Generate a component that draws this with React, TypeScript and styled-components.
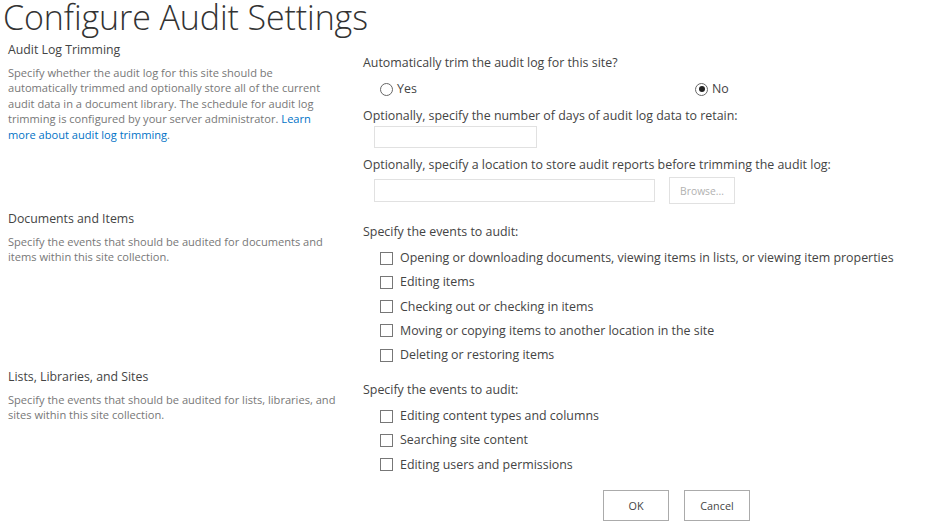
import React from "react";
import styled, { createGlobalStyle } from "styled-components";

const GlobalStyle = createGlobalStyle`
  html, body {
    margin: 0;
    padding: 0;
    background: #fff;
  }
  body {
    font-family: "Open Sans", "Noto Sans", Arial, sans-serif;
    color: #444;
  }
`;

const Page = styled.div`
  width: 933px;
  height: 532px;
  overflow: hidden;
`;

const Title = styled.h1`
  margin: 0 0 6px 3px;
  font-size: 34px;
  font-weight: 300;
  line-height: 34px;
  color: #333;
  letter-spacing: -0.1px;
`;

const Section = styled.section<{ $h?: number }>`
  display: grid;
  grid-template-columns: 363px 1fr;
  height: ${(p) => (p.$h ? `${p.$h}px` : "auto")};
`;

const Info = styled.div`
  padding-left: 8px;
  padding-top: 1px;
`;

const SectionHeading = styled.h3`
  margin: 0;
  font-size: 12.3px;
  font-weight: 400;
  line-height: 18px;
  color: #444;
`;

const Description = styled.p`
  margin: 6px 0 0;
  width: 332px;
  font-size: 11.1px;
  line-height: 15.4px;
  color: #777;
`;

const Link = styled.a`
  color: #0072c6;
  text-decoration: none;
`;

const Fields = styled.div`
  padding-top: 14px;
`;

const Label = styled.div<{ $gap?: number }>`
  font-size: 12.4px;
  line-height: 18px;
  color: #444;
  margin-top: ${(p) => p.$gap ?? 0}px;
`;

const RadioRow = styled.div`
  display: grid;
  grid-template-columns: 315px auto;
  padding-left: 17px;
  margin-top: 8px;
`;

const Choice = styled.label`
  display: flex;
  align-items: center;
  gap: 4px;
  font-size: 12.4px;
  line-height: 18px;
  color: #444;
`;

const Radio = styled.span<{ $checked?: boolean }>`
  position: relative;
  width: 11px;
  height: 11px;
  border: 1px solid #666;
  border-radius: 50%;
  background: #fff;
  &::after {
    content: "";
    display: ${(p) => (p.$checked ? "block" : "none")};
    position: absolute;
    left: 2.5px;
    top: 2.5px;
    width: 6px;
    height: 6px;
    border-radius: 50%;
    background: #222;
  }
`;

const InputRow = styled.div<{ $gap?: number }>`
  display: flex;
  align-items: center;
  gap: 14px;
  padding-left: 11px;
  margin-top: ${(p) => p.$gap ?? 0}px;
`;

const TextBox = styled.div<{ $w: number; $h: number }>`
  width: ${(p) => p.$w}px;
  height: ${(p) => p.$h}px;
  box-sizing: border-box;
  border: 1px solid #e1e1e1;
  background: #fff;
`;

const Button = styled.button<{ $disabled?: boolean }>`
  box-sizing: border-box;
  min-width: 66px;
  height: ${(p) => (p.$disabled ? 27 : 31)}px;
  padding: 0 10px;
  border: 1px solid ${(p) => (p.$disabled ? "#e1e1e1" : "#ababab")};
  background: #fff;
  font-family: inherit;
  font-size: ${(p) => (p.$disabled ? 10.3 : 10.8)}px;
  color: ${(p) => (p.$disabled ? "#b1b1b1" : "#444")};
`;

const CheckList = styled.div`
  display: flex;
  flex-direction: column;
  gap: 6.3px;
  padding-left: 17px;
  margin-top: 8px;
`;

const CheckItem = styled.label`
  display: flex;
  align-items: center;
  gap: 7px;
  font-size: 12.4px;
  line-height: 18px;
  color: #444;
  white-space: nowrap;
`;

const Box = styled.span`
  width: 11px;
  height: 11px;
  border: 1px solid #777;
  background: #fff;
  flex: none;
`;

const ButtonBar = styled.div`
  display: flex;
  justify-content: flex-end;
  gap: 15px;
  width: 387px;
  margin-top: 16px;
`;

const docEvents = [
  "Opening or downloading documents, viewing items in lists, or viewing item properties",
  "Editing items",
  "Checking out or checking in items",
  "Moving or copying items to another location in the site",
  "Deleting or restoring items",
];

const siteEvents = [
  "Editing content types and columns",
  "Searching site content",
  "Editing users and permissions",
];

const Checks = ({ items }: { items: string[] }) => (
  <CheckList>
    {items.map((t) => (
      <CheckItem key={t}>
        <Box />
        {t}
      </CheckItem>
    ))}
  </CheckList>
);

export default function App() {
  return (
    <Page>
      <GlobalStyle />
      <Title>Configure Audit Settings</Title>

      <Section $h={169}>
        <Info>
          <SectionHeading>Audit Log Trimming</SectionHeading>
          <Description>
            Specify whether the audit log for this site should be automatically trimmed and
            optionally store all of the current audit data in a document library. The schedule
            for audit log trimming is configured by your server administrator.{" "}
            <Link href="#">Learn more about audit log trimming</Link>.
          </Description>
        </Info>
        <Fields>
          <Label>Automatically trim the audit log for this site?</Label>
          <RadioRow>
            <Choice>
              <Radio />
              Yes
            </Choice>
            <Choice>
              <Radio $checked />
              No
            </Choice>
          </RadioRow>
          <Label $gap={9}>Optionally, specify the number of days of audit log data to retain:</Label>
          <InputRow $gap={1}>
            <TextBox $w={163} $h={22} />
          </InputRow>
          <Label $gap={8}>
            Optionally, specify a location to store audit reports before trimming the audit log:
          </Label>
          <InputRow $gap={3}>
            <TextBox $w={281} $h={23} />
            <Button $disabled>Browse...</Button>
          </InputRow>
        </Fields>
      </Section>

      <Section $h={158}>
        <Info>
          <SectionHeading>Documents and Items</SectionHeading>
          <Description>
            Specify the events that should be audited for documents and items within this site
            collection.
          </Description>
        </Info>
        <Fields>
          <Label>Specify the events to audit:</Label>
          <Checks items={docEvents} />
        </Fields>
      </Section>

      <Section>
        <Info>
          <SectionHeading>Lists, Libraries, and Sites</SectionHeading>
          <Description>
            Specify the events that should be audited for lists, libraries, and sites within this
            site collection.
          </Description>
        </Info>
        <Fields>
          <Label>Specify the events to audit:</Label>
          <Checks items={siteEvents} />
          <ButtonBar>
            <Button>OK</Button>
            <Button>Cancel</Button>
          </ButtonBar>
        </Fields>
      </Section>
    </Page>
  );
}
